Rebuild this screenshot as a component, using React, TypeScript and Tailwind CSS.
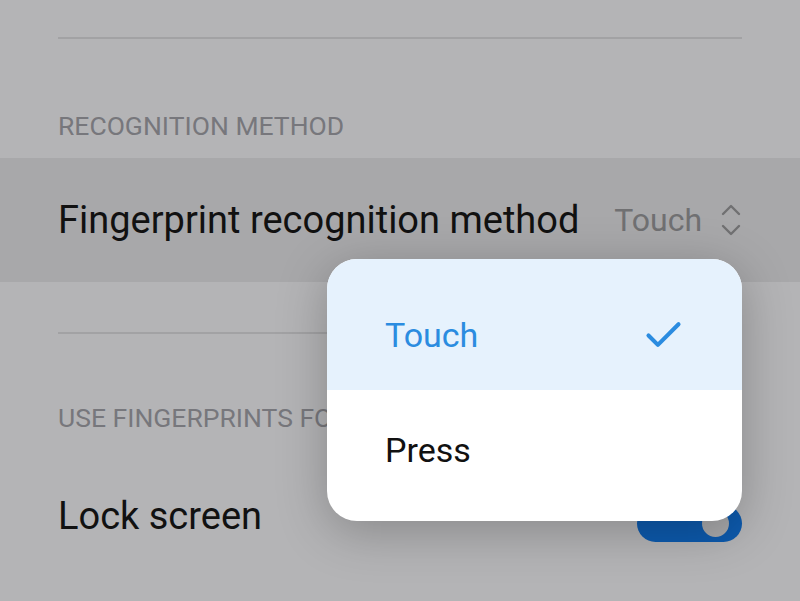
import { Check } from "lucide-react";

const font = { fontFamily: "Roboto, 'Noto Sans', sans-serif" };

export default function App() {
  return (
    <div className="relative h-[601px] w-[800px] overflow-hidden bg-[#b4b4b6]" style={font}>
      <div className="flex flex-col">
        <div className="px-[58px] pt-[37px]">
          <div className="h-[2px] bg-[#a2a2a4]" />
        </div>
        <div className="px-[58px] pt-[71px] pb-[16px] text-[26.5px] leading-[32px] text-[#77777c]">
          RECOGNITION METHOD
        </div>
        <div className="flex h-[124px] items-center justify-between bg-[#a8a8aa] px-[58px]">
          <span className="text-[38px] text-[#111]">Fingerprint recognition method</span>
          <span className="flex items-center gap-[18px] text-[32px] text-[#707072]">
            Touch
            <Chevrons />
          </span>
        </div>
        <div className="px-[58px] pt-[50px]">
          <div className="h-[2px] bg-[#a2a2a4]" />
        </div>
        <div className="px-[58px] pt-[68px] text-[26.5px] leading-[32px] text-[#77777c]">
          USE FINGERPRINTS FOR
        </div>
        <div className="mt-[22px] flex h-[120px] items-center justify-between px-[58px]">
          <span className="text-[38px] text-[#111]">Lock screen</span>
          <div className="relative mt-[14px] h-[37px] w-[105px] rounded-full bg-[#0d5aad]">
            <div className="absolute right-[13px] top-[5px] h-[27px] w-[27px] rounded-full bg-[#a9a9ab]" />
          </div>
        </div>
      </div>

      <div className="absolute left-[327px] top-[259px] w-[415px] overflow-hidden rounded-[30px] bg-white shadow-[0_10px_50px_rgba(0,0,0,0.25)]">
        <div className="flex h-[131px] items-center justify-between bg-[#e6f2fd] pl-[58px] pr-[56px] pt-[22px]">
          <span className="text-[34px] text-[#2b8ce0]">Touch</span>
          <Check className="h-[45px] w-[45px] text-[#2b8ce0]" strokeWidth={2.2} />
        </div>
        <div className="flex h-[131px] items-center pb-[10px] pl-[58px]">
          <span className="text-[34px] text-[#111]">Press</span>
        </div>
      </div>
    </div>
  );
}

function Chevrons() {
  return (
    <svg width="22" height="34" viewBox="0 0 22 34" fill="none" stroke="#707072" strokeWidth="2.4" strokeLinecap="round" strokeLinejoin="round">
      <path d="M3 11 L11 3 L19 11" />
      <path d="M3 23 L11 31 L19 23" />
    </svg>
  );
}
